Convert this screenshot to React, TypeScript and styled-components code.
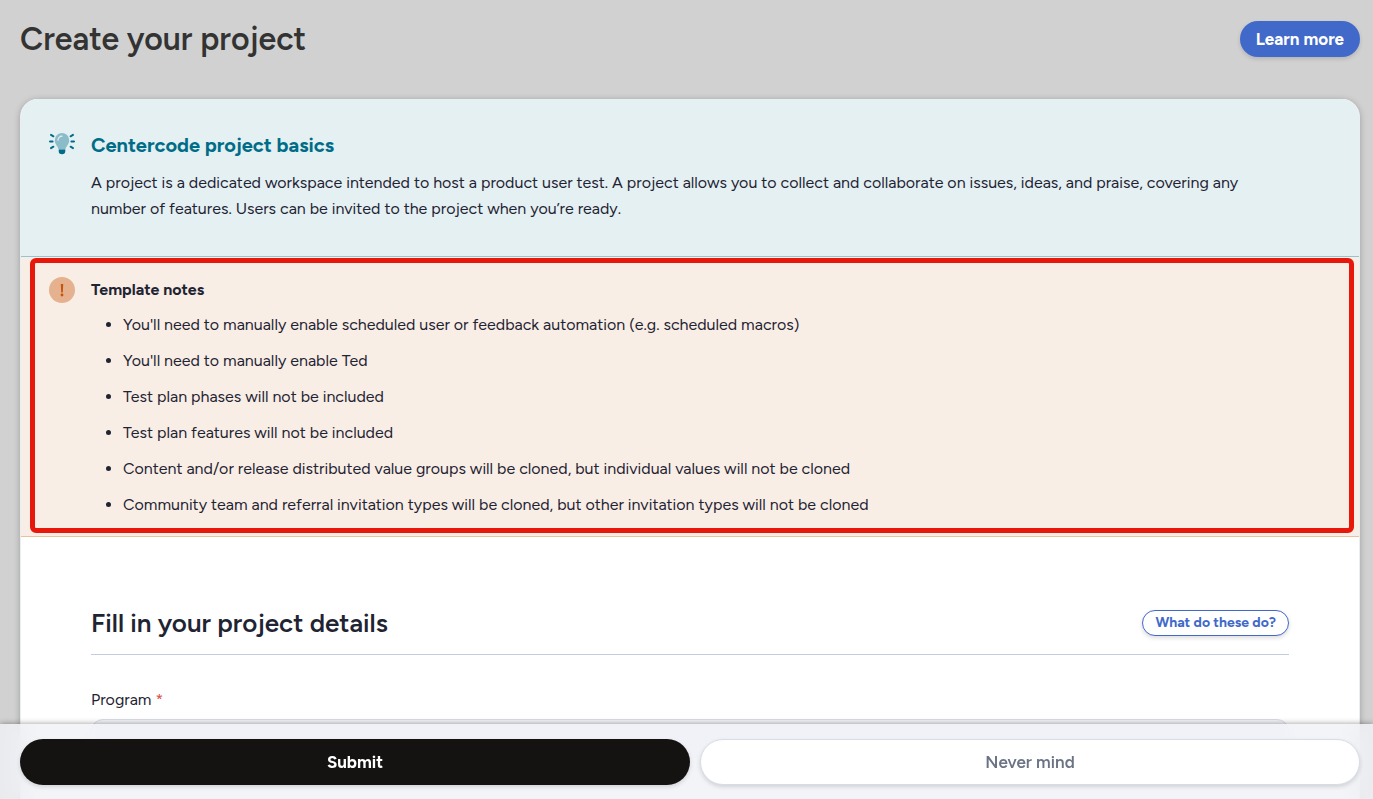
import React from 'react';
import styled, { createGlobalStyle } from 'styled-components';

const GlobalStyle = createGlobalStyle`
  *, *::before, *::after { box-sizing: border-box; }
  body {
    margin: 0;
    background: #d1d1d1;
    color: #1f2433;
    font-family: Figtree, Lato, "Liberation Sans", sans-serif;
    font-size: 16px;
    line-height: 26px;
  }
  h1, h2, h3, p, ul { margin: 0; padding: 0; }
`;

const Page = styled.div`
  display: flex;
  flex-direction: column;
  height: 100vh;
  overflow: hidden;
  padding: 0 13px 0 20px;
`;

const Header = styled.header`
  display: flex;
  flex: none;
  align-items: center;
  justify-content: space-between;
  padding: 19px 0 40px;
`;

const Title = styled.h1`
  color: #333333;
  font-size: 32px;
  font-weight: 600;
  line-height: 40px;
`;

const Button = styled.button<{ $size: 'small' | 'medium' | 'large'; $tone: 'solid' | 'outline' | 'dark' | 'light' }>`
  border-radius: 24px;
  cursor: pointer;
  font-family: inherit;
  font-weight: 700;
  box-shadow: 0 2px 4px rgba(0, 0, 0, 0.14);
  ${({ $size }) =>
    ({
      small: 'height: 26px; padding: 0 12px; font-size: 14px; line-height: 20px;',
      medium: 'height: 36px; padding: 0 16px; font-size: 17px; line-height: 24px;',
      large: 'height: 46px; padding: 0 16px; font-size: 17px; line-height: 24px;',
    })[$size]}
  ${({ $tone }) =>
    ({
      solid: 'background: #4169ca; border: 0; color: #ffffff;',
      outline: 'background: #ffffff; border: 1px solid #4169ca; color: #4169ca;',
      dark: 'background: #141311; border: 0; color: #ffffff;',
      light: 'background: #ffffff; border: 1px solid #d8dce6; color: #6b7385; font-weight: 600;',
    })[$tone]}
`;

const Card = styled.main`
  flex: 1 0 auto;
  border: 1px solid #e9eef1;
  border-top: 0;
  border-radius: 18px 18px 0 0;
  overflow: hidden;
  background: #ffffff;
  box-shadow: 0 1px 6px rgba(0, 0, 0, 0.25);
`;

const Panel = styled.section<{ $tone: 'info' | 'warning' }>`
  position: relative;
  display: grid;
  grid-template-columns: 26px 1fr;
  column-gap: 16px;
  ${({ $tone }) =>
    $tone === 'info'
      ? 'padding: 32px 70px 34px 28px; background: #e5f0f3; border-bottom: 1px solid #94c4d1;'
      : 'padding: 20px 70px 18px 28px; background: #f9eee6; border-bottom: 1px solid #e9c19d;'}
`;

const PanelTitle = styled.h2`
  margin-bottom: 10px;
  color: #006d88;
  font-size: 20px;
  font-weight: 700;
  line-height: 29px;
`;

const NotesTitle = styled.h3`
  margin-bottom: 9px;
  font-size: 16px;
  font-weight: 700;
  line-height: 26px;
`;

const Notes = styled.ul`
  display: grid;
  row-gap: 10px;
  padding-left: 32px;
`;

const WarningBadge = styled.svg`
  display: block;
  width: 26px;
  height: 26px;
`;

const BulbIcon = styled.svg`
  display: block;
  width: 26px;
  height: 26px;
`;

const Highlight = styled.div`
  position: absolute;
  inset: 1px 5px 3px 9px;
  border: 5px solid #e8170c;
  border-radius: 6px;
  pointer-events: none;
`;

const Details = styled.section`
  padding: 70px 70px 90px;
`;

const DetailsHead = styled.div`
  display: flex;
  align-items: center;
  justify-content: space-between;
  padding-bottom: 15px;
  border-bottom: 1px solid #c3ccdd;
`;

const DetailsTitle = styled.h2`
  font-size: 26px;
  font-weight: 600;
  line-height: 32px;
`;

const Field = styled.div`
  display: grid;
  row-gap: 6px;
  padding-top: 32px;
`;

const Required = styled.span`
  color: #e0504e;
`;

const Select = styled.select`
  width: 100%;
  height: 46px;
  padding: 0 16px;
  appearance: none;
  border: 1px solid #d8dce6;
  border-radius: 12px;
  background: #f3f4f8;
  font: inherit;
`;

const ActionBar = styled.footer`
  position: fixed;
  inset: auto 0 0 0;
  display: flex;
  gap: 10px;
  padding: 15px 13px 14px 20px;
  background: rgba(240, 241, 246, 0.8);
  backdrop-filter: blur(12px);
  box-shadow: 0 0 6px rgba(0, 0, 0, 0.4);

  & > :first-child { flex: 1 1 670px; }
  & > :last-child { flex: 1 1 660px; }
`;

export default function App() {
  return (
    <>
      <GlobalStyle />
      <Page>
        <Header>
          <Title>Create your project</Title>
          <Button type="button" $size="medium" $tone="solid">Learn more</Button>
        </Header>
        <Card>
          <Panel $tone="info">
            <BulbIcon viewBox="0 0 26 26" aria-hidden="true">
              <path d="M13 2a7.200 7.200 0 0 0-7.200 7.200c0 4.200 3.200 5.800 3.900 9.300h6.600c.7-3.500 3.900-5.100 3.900-9.300A7.200 7.200 0 0 0 13 2z" fill="#8bbcca" />
              <path d="M9 9.200A4 4 0 0 1 13 5.200" fill="none" stroke="#e5f0f3" strokeWidth="1.200" strokeLinecap="round" />
              <path d="M9.700 18.500h6.600v1.500a3.300 3.300 0 0 1-6.600 0z" fill="#006d88" />
              <path d="M1 10.500h2.600M22.400 10.500H25M2 3.900l2.400 1.400M24 3.900l-2.400 1.400M2 17.100l2.400-1.400M24 17.100l-2.400-1.400" stroke="#006d88" strokeWidth="2" strokeLinecap="round" />
            </BulbIcon>
            <div>
              <PanelTitle>Centercode project basics</PanelTitle>
              <p>
                A project is a dedicated workspace intended to host a product user test. A project allows you to collect
                and collaborate on issues, ideas, and praise, covering any number of features. Users can be invited to
                the project when you’re ready.
              </p>
            </div>
          </Panel>
          <Panel $tone="warning">
            <WarningBadge viewBox="0 0 26 26" aria-hidden="true">
              <circle cx="13" cy="13" r="13" fill="#e5b18f" />
              <path d="M11.800 7h2.400l-.4 8.400h-1.600z" fill="#c8530a" />
              <circle cx="13" cy="18" r="1.400" fill="#c8530a" />
            </WarningBadge>
            <div>
              <NotesTitle>Template notes</NotesTitle>
              <Notes>
                <li>You'll need to manually enable scheduled user or feedback automation (e.g. scheduled macros)</li>
                <li>You'll need to manually enable Ted</li>
                <li>Test plan phases will not be included</li>
                <li>Test plan features will not be included</li>
                <li>Content and/or release distributed value groups will be cloned, but individual values will not be cloned</li>
                <li>Community team and referral invitation types will be cloned, but other invitation types will not be cloned</li>
              </Notes>
            </div>
            <Highlight />
          </Panel>
          <Details>
            <DetailsHead>
              <DetailsTitle>Fill in your project details</DetailsTitle>
              <Button type="button" $size="small" $tone="outline">What do these do?</Button>
            </DetailsHead>
            <Field>
              <label htmlFor="program">Program <Required>*</Required></label>
              <Select id="program" required defaultValue=""><option value="" /></Select>
            </Field>
          </Details>
        </Card>
      </Page>
      <ActionBar>
        <Button type="submit" $size="large" $tone="dark">Submit</Button>
        <Button type="button" $size="large" $tone="light">Never mind</Button>
      </ActionBar>
    </>
  );
}
